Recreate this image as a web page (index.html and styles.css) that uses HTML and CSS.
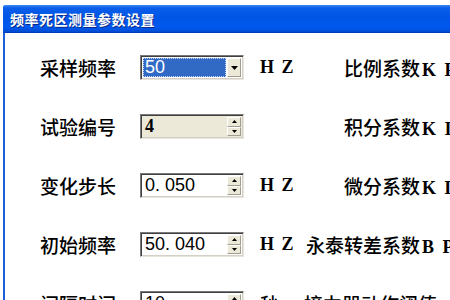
FILE: index.html
```html
<!DOCTYPE html>
<html lang="zh-CN">
<head>
<meta charset="UTF-8" />
<title>频率死区测量参数设置</title>
<link rel="stylesheet" href="styles.css">
</head>
<body>

<div class="window">
  <div class="titlebar">
    <span class="title">频率死区测量参数设置</span>
  </div>

  <div class="client">

    <div class="row">
      <span class="label">采样频率</span>
      <div class="field combo">
        <span class="combo-value">50</span>
        <span class="btn btn-full">
          <svg width="7" height="4" viewBox="0 0 7 4"><path d="M0 0H7L3.5 4Z" fill="#000"/></svg>
        </span>
      </div>
      <span class="unit">H Z</span>
      <span class="param"><span class="cn">比例系数</span><span class="en">K P</span></span>
    </div>

    <div class="row">
      <span class="label">试验编号</span>
      <div class="field spin disabled">
        <span class="value serif">4</span>
        <span class="spin-btns">
          <span class="btn"><svg width="5" height="3" viewBox="0 0 5 3"><path d="M0 3H5L2.5 0Z" fill="#000"/></svg></span>
          <span class="btn"><svg width="5" height="3" viewBox="0 0 5 3"><path d="M0 0H5L2.5 3Z" fill="#000"/></svg></span>
        </span>
      </div>
      <span class="unit"></span>
      <span class="param"><span class="cn">积分系数</span><span class="en">K I</span></span>
    </div>

    <div class="row">
      <span class="label">变化步长</span>
      <div class="field spin">
        <span class="value">0. 050</span>
        <span class="spin-btns">
          <span class="btn"><svg width="5" height="3" viewBox="0 0 5 3"><path d="M0 3H5L2.5 0Z" fill="#000"/></svg></span>
          <span class="btn"><svg width="5" height="3" viewBox="0 0 5 3"><path d="M0 0H5L2.5 3Z" fill="#000"/></svg></span>
        </span>
      </div>
      <span class="unit">H Z</span>
      <span class="param"><span class="cn">微分系数</span><span class="en">K D</span></span>
    </div>

    <div class="row">
      <span class="label">初始频率</span>
      <div class="field spin">
        <span class="value">50. 040</span>
        <span class="spin-btns">
          <span class="btn"><svg width="5" height="3" viewBox="0 0 5 3"><path d="M0 3H5L2.5 0Z" fill="#000"/></svg></span>
          <span class="btn"><svg width="5" height="3" viewBox="0 0 5 3"><path d="M0 0H5L2.5 3Z" fill="#000"/></svg></span>
        </span>
      </div>
      <span class="unit">H Z</span>
      <span class="param"><span class="cn">永泰转差系数</span><span class="en">B P</span></span>
    </div>

    <div class="row">
      <span class="label">间隔时间</span>
      <div class="field spin">
        <span class="value">10</span>
        <span class="spin-btns">
          <span class="btn"><svg width="5" height="3" viewBox="0 0 5 3"><path d="M0 3H5L2.5 0Z" fill="#000"/></svg></span>
          <span class="btn"><svg width="5" height="3" viewBox="0 0 5 3"><path d="M0 0H5L2.5 3Z" fill="#000"/></svg></span>
        </span>
      </div>
      <span class="unit cjk">秒</span>
      <span class="param"><span class="cn">接力器动作阈值</span><span class="en"></span></span>
    </div>

  </div>
</div>

</body>
</html>
```

FILE: styles.css
```css
html, body {
  margin: 0;
  overflow: hidden;
  background-color: #fff;
}
body {
  font-family: "Noto Sans CJK SC", sans-serif;
  color: #000;
}
.window {
  margin: 5px 0 0 3px;
  width: 560px;
}
.titlebar {
  height: 28px;
  display: flex;
  align-items: center;
  padding-left: 7px;
  background: linear-gradient(#3d8af7 0px, #0a5ee9 3px, #0055e5 12px, #0058ee 22px, #0050da 26px, #0038b4 28px);
  border-top-left-radius: 2px;
}
.title {
  color: #fff;
  font-size: 14px;
  font-weight: bold;
  letter-spacing: 0.5px;
  text-shadow: 1px 1px 0 #0a2a8a;
}
.client {
  border-left: 2px solid #1c5fd9;
  padding: 22px 0 40px 0;
}
.row {
  display: flex;
  align-items: center;
  height: 25px;
  margin-bottom: 34px;
  white-space: nowrap;
}
.label {
  width: 100px;
  margin-left: 35px;
  font-size: 19px;
  font-weight: 500;
  line-height: 25px;
}
.field {
  box-sizing: border-box;
  width: 104px;
  height: 25px;
  display: flex;
  align-items: stretch;
  background-color: #fff;
  border-top: 1px solid #7a7a7a;
  border-left: 1px solid #7a7a7a;
  border-right: 1px solid #e8e6dc;
  border-bottom: 1px solid #e8e6dc;
  box-shadow: inset 1px 1px 0 #404040, inset -1px -1px 0 #d4d0c8;
  padding: 2px;
}
.field.disabled {
  background-color: #ece9d8;
}
.combo-value {
  flex: 1;
  background-color: #316ac5;
  outline: 1px dotted #c8d6f0;
  outline-offset: -1px;
  color: #fff;
  font-family: "Liberation Sans", Arial, sans-serif;
  font-size: 18px;
  line-height: 19px;
  padding-left: 2px;
  margin-right: 1px;
}
.value {
  flex: 1;
  font-family: "Liberation Sans", Arial, sans-serif;
  font-size: 18px;
  line-height: 19px;
  padding-left: 2px;
}
.value.serif {
  font-family: "Liberation Serif", "Times New Roman", serif;
  font-weight: bold;
}
.btn {
  width: 13px;
  display: flex;
  align-items: center;
  justify-content: center;
  background-color: #ece9d8;
  box-sizing: border-box;
  border-top: 1px solid #fff;
  border-left: 1px solid #fff;
  border-right: 1px solid #a09d90;
  border-bottom: 1px solid #a09d90;
}
.btn-full {
  width: 14px;
}
.spin-btns {
  display: flex;
  flex-direction: column;
  width: 14px;
}
.spin-btns .btn {
  flex: 1;
  width: 14px;
}
.unit {
  width: 44px;
  margin-left: 16px;
  font-family: "Liberation Serif", "Times New Roman", serif;
  font-weight: bold;
  font-size: 18px;
  word-spacing: 3px;
}
.unit.cjk {
  font-family: "Noto Sans CJK SC", sans-serif;
  font-weight: 500;
  font-size: 19px;
}
.param {
  display: flex;
  align-items: baseline;
}
.cn {
  width: 116px;
  text-align: right;
  font-size: 19px;
  font-weight: 500;
}
.en {
  margin-left: 2px;
  font-family: "Liberation Serif", "Times New Roman", serif;
  font-weight: bold;
  font-size: 18px;
  word-spacing: 4px;
}
```
